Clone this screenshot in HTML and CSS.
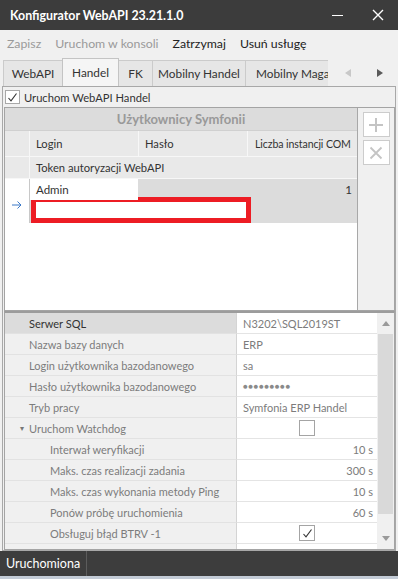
FILE: index.html
```html
<!DOCTYPE html>
<html lang="pl">
<head>
    <meta charset="UTF-8">
    <title>Konfigurator WebAPI</title>
    <link rel="stylesheet" href="styles.css">
</head>
<body>

<div class="window">
    <div class="titlebar">
        <span class="title">Konfigurator WebAPI 23.21.1.0</span>
        <span class="win-btns">
            <span class="min-btn"></span>
            <svg class="close-btn" width="12" height="12" viewBox="0 0 12 12">
                <path d="M1 1 L11 11 M11 1 L1 11" stroke="#fff" stroke-width="1.4" fill="none"/>
            </svg>
        </span>
    </div>

    <div class="menubar">
        <span class="menu-item off">Zapisz</span>
        <span class="menu-item off">Uruchom w konsoli</span>
        <span class="menu-item">Zatrzymaj</span>
        <span class="menu-item">Usuń usługę</span>
    </div>

    <div class="tabstrip">
        <div class="tabs">
            <div class="tab t-webapi">WebAPI</div>
            <div class="tab t-handel active">Handel</div>
            <div class="tab t-fk">FK</div>
            <div class="tab t-mh">Mobilny Handel</div>
            <div class="tab t-mm">Mobilny Magazyn</div>
        </div>
        <div class="tab-nav">
            <svg width="6" height="8" viewBox="0 0 6 8"><path d="M6 0 L0 4 L6 8 Z" fill="#c8c8c8"/></svg>
            <svg width="6" height="8" viewBox="0 0 6 8"><path d="M0 0 L6 4 L0 8 Z" fill="#5a5a5a"/></svg>
        </div>
    </div>

    <div class="page">
        <div class="run-check">
            <span class="cb">
                <svg width="11" height="11" viewBox="0 0 11 11"><path d="M1.5 6 L4 8.8 L9.5 1.5" stroke="#333" stroke-width="1.1" fill="none"/></svg>
            </span>
            Uruchom WebAPI Handel
        </div>

        <div class="users">
            <div class="grid">
                <div class="band">Użytkownicy Symfonii</div>
                <div class="hrow">
                    <div class="ind"></div>
                    <div class="hc">Login</div>
                    <div class="hc">Hasło</div>
                    <div class="hc last">Liczba instancji COM</div>
                </div>
                <div class="hrow token-head">
                    <div class="ind"></div>
                    <div class="hc span3">Token autoryzacji WebAPI</div>
                </div>
                <div class="drow">
                    <div class="ind current">
                        <svg width="10" height="8" viewBox="0 0 10 8"><path d="M0 4 H9 M5.5 0.5 L9 4 L5.5 7.5" stroke="#3a78c8" stroke-width="1" fill="none"/></svg>
                    </div>
                    <div class="dcells">
                        <div class="dline">
                            <div class="dc login">Admin</div>
                            <div class="dc"></div>
                            <div class="dc num">1</div>
                        </div>
                        <div class="dline token-line">
                            <div class="token-mark"></div>
                        </div>
                    </div>
                </div>
            </div>
            <div class="side">
                <div class="side-btn">
                    <svg width="16" height="16" viewBox="0 0 16 16"><path d="M8 1 V15 M1 8 H15" stroke="#c4c4c4" stroke-width="2" fill="none"/></svg>
                </div>
                <div class="side-btn">
                    <svg width="14" height="14" viewBox="0 0 14 14"><path d="M1.5 1.5 L12.5 12.5 M12.5 1.5 L1.5 12.5" stroke="#c4c4c4" stroke-width="1.8" fill="none"/></svg>
                </div>
            </div>
        </div>

        <div class="props">
            <div class="plist">
                <div class="prow selected"><div class="pl">Serwer SQL</div><div class="pv">N3202\SQL2019ST</div></div>
                <div class="prow"><div class="pl">Nazwa bazy danych</div><div class="pv">ERP</div></div>
                <div class="prow"><div class="pl">Login użytkownika bazodanowego</div><div class="pv">sa</div></div>
                <div class="prow"><div class="pl">Hasło użytkownika bazodanowego</div><div class="pv dots">●●●●●●●●●</div></div>
                <div class="prow"><div class="pl">Tryb pracy</div><div class="pv">Symfonia ERP Handel</div></div>
                <div class="prow"><div class="pl cat"><span class="caret">▾</span>Uruchom Watchdog</div><div class="pv center"><span class="pcb"></span></div></div>
                <div class="prow"><div class="pl sub">Interwał weryfikacji</div><div class="pv right">10 s</div></div>
                <div class="prow"><div class="pl sub">Maks. czas realizacji zadania</div><div class="pv right">300 s</div></div>
                <div class="prow"><div class="pl sub">Maks. czas wykonania metody Ping</div><div class="pv right">10 s</div></div>
                <div class="prow"><div class="pl sub">Ponów próbę uruchomienia</div><div class="pv right">60 s</div></div>
                <div class="prow"><div class="pl sub">Obsługuj błąd BTRV -1</div><div class="pv center"><span class="pcb">
                    <svg width="11" height="11" viewBox="0 0 11 11"><path d="M1.5 6 L4 8.8 L9.5 1.5" stroke="#333" stroke-width="1.1" fill="none"/></svg>
                </span></div></div>
                <div class="prow"><div class="pl sub"></div><div class="pv"></div></div>
            </div>
            <div class="vscroll">
                <svg class="arrow" width="8" height="5" viewBox="0 0 8 5"><path d="M0 5 L4 0 L8 5 Z" fill="#9a9a9a"/></svg>
                <div class="thumb"></div>
                <div class="track"></div>
                <svg class="arrow" width="8" height="5" viewBox="0 0 8 5"><path d="M0 0 L4 5 L8 0 Z" fill="#9a9a9a"/></svg>
            </div>
        </div>
    </div>

    <div class="statusbar">
        <span class="status-cell">Uruchomiona</span>
    </div>
    <div class="bottom-strip"></div>
</div>

</body>
</html>
```

FILE: styles.css
```css
body {
    margin: 0;
    padding: 0;
    font-family: Lato, "Open Sans", sans-serif;
    font-size: 11.5px;
    color: #333;
}
.window {
    width: 398px;
    height: 579px;
    display: flex;
    flex-direction: column;
    background: #f0f0f0;
    overflow: hidden;
}

/* title bar */
.titlebar {
    height: 30px;
    flex: none;
    background: #3c3c3c;
    color: #fff;
    display: flex;
    align-items: center;
    justify-content: space-between;
    padding: 0 14px 0 10px;
}
.title {
    font-weight: bold;
    font-size: 12.4px;
}
.win-btns {
    display: flex;
    align-items: center;
    gap: 29px;
}
.min-btn {
    width: 11px;
    height: 1px;
    background: #fff;
}

/* menu */
.menubar {
    height: 26px;
    flex: none;
    display: flex;
    align-items: center;
    padding-left: 7px;
    gap: 14px;
    font-size: 12.3px;
    color: #222;
}
.menu-item.off {
    color: #9a9a9a;
}

/* tabs */
.tabstrip {
    height: 30px;
    flex: none;
    display: flex;
    align-items: flex-end;
    padding-left: 3px;
}
.tabs {
    width: 325px;
    display: flex;
    align-items: flex-end;
    overflow: hidden;
    flex: none;
}
.tab {
    height: 26px;
    flex: none;
    box-sizing: border-box;
    display: flex;
    align-items: center;
    justify-content: center;
    background: #e6e6e6;
    border: 1px solid #cbcbcb;
    border-bottom: none;
    margin-right: -1px;
    font-size: 11.8px;
    color: #333;
    white-space: nowrap;
}
.tab.active {
    height: 28px;
    background: #f5f5f5;
    border-color: #c4c4c4;
    position: relative;
}
.t-webapi { width: 60px; }
.t-handel { width: 57px; }
.t-fk { width: 35px; }
.t-mh { width: 94px; }
.t-mm { width: 100px; justify-content: flex-start; padding-left: 10px; }
.tab-nav {
    flex: 1;
    height: 26px;
    display: flex;
    align-items: center;
    justify-content: space-between;
    padding: 0 15px 0 17px;
}

/* page */
.page {
    flex: 1;
    margin: 0 2px;
    border: 1px solid #a8a8a8;
    padding: 0 0 0 1px;
    display: flex;
    flex-direction: column;
    min-height: 0;
}
.run-check {
    height: 20px;
    flex: none;
    display: flex;
    align-items: center;
    gap: 4px;
    font-size: 11.2px;
}
.cb {
    width: 15px;
    height: 14px;
    box-sizing: border-box;
    border: 1px solid #a8a8a8;
    background: #fff;
    display: flex;
    align-items: center;
    justify-content: center;
    margin-left: 1px;
}

/* users grid */
.users {
    height: 204px;
    flex: none;
    box-sizing: border-box;
    border: 1px solid #a4a4a4;
    display: flex;
    background: #fff;
}
.grid {
    width: 352px;
    flex: none;
}
.band {
    height: 23px;
    box-sizing: border-box;
    border-bottom: 1px solid #d0d0d0;
    background: #dcdcdc;
    color: #999;
    font-weight: bold;
    font-size: 13px;
    display: flex;
    align-items: center;
    justify-content: center;
}
.hrow {
    display: grid;
    grid-template-columns: 24px 109px 109px 110px;
    height: 26px;
    background: #e9e9e9;
    border-bottom: 1px solid #f7f7f7;
    box-sizing: border-box;
    font-size: 11.2px;
}
.hrow.token-head {
    height: 22px;
}
.hc {
    display: flex;
    align-items: center;
    padding-left: 6px;
    border-left: 1px solid #f7f7f7;
    white-space: nowrap;
    overflow: hidden;
}
.hc.last {
    padding-left: 7px;
    font-size: 10.6px;
    letter-spacing: -0.1px;
}
.hc.span3 {
    grid-column: 2 / 5;
}
.ind {
    background: #e9e9e9;
}
.drow {
    display: grid;
    grid-template-columns: 24px 328px;
    height: 44px;
}
.ind.current {
    background: #fff;
    display: flex;
    align-items: flex-end;
    padding: 0 0 14px 7px;
}
.dcells {
    border-left: 1px solid #c8c8c8;
    background: #dcdcdc;
}
.dline {
    display: grid;
    grid-template-columns: 108px 109px 110px;
    height: 21px;
}
.dc {
    display: flex;
    align-items: center;
}
.dc.login {
    background: #fff;
    padding-left: 6px;
}
.dc.num {
    justify-content: flex-end;
    padding-right: 5px;
}
.token-line {
    display: block;
    height: 23px;
}
.token-mark {
    width: 220px;
    height: 26px;
    box-sizing: border-box;
    margin: -3px 0 0 1px;
    border: 5px solid #ed1c24;
    background: #fff;
}
.side {
    flex: 1;
    background: #f0f0f0;
    border-left: 1px solid #a8a8a8;
    display: flex;
    flex-direction: column;
    align-items: center;
    padding-top: 4px;
    gap: 3px;
}
.side-btn {
    width: 27px;
    height: 25px;
    box-sizing: border-box;
    border: 1px solid #cccccc;
    background: #fff;
    display: flex;
    align-items: center;
    justify-content: center;
}

/* property grid */
.props {
    flex: 1;
    min-height: 0;
    box-sizing: border-box;
    border: 1px solid #a4a4a4;
    border-top-width: 2px;
    border-top-color: #9c9c9c;
    display: flex;
    overflow: hidden;
    font-size: 11px;
}
.plist {
    width: 372px;
    flex: none;
}
.prow {
    display: grid;
    grid-template-columns: 231px 141px;
    height: 21px;
}
.pl {
    display: flex;
    align-items: center;
    padding-left: 24px;
    background: #f0f0f0;
    border-bottom: 1px solid #e2e2e2;
    color: #7c7c7c;
    white-space: nowrap;
}
.prow.selected .pl {
    background: #dcdcdc;
    color: #333;
}
.pl.cat {
    padding-left: 15px;
}
.caret {
    font-size: 8px;
    width: 9px;
    color: #777;
}
.pl.sub {
    padding-left: 45px;
}
.pv {
    display: flex;
    align-items: center;
    padding: 0 6px;
    background: #fff;
    border-left: 1px solid #d4d4d4;
    border-bottom: 1px solid #e4e4e4;
    color: #7c7c7c;
    white-space: nowrap;
}
.pv.dots {
    font-size: 8px;
    letter-spacing: 0.5px;
    color: #8a8a8a;
}
.pv.right {
    justify-content: flex-end;
    padding-right: 4px;
}
.pv.center {
    justify-content: center;
}
.pcb {
    width: 16px;
    height: 16px;
    box-sizing: border-box;
    border: 1px solid #a4a4a4;
    background: #fff;
    display: flex;
    align-items: center;
    justify-content: center;
}
.vscroll {
    flex: 1;
    background: #f0f0f0;
    display: flex;
    flex-direction: column;
    align-items: center;
}
.vscroll .arrow {
    flex: none;
    margin: 8px 0;
}
.thumb {
    width: 15px;
    height: 180px;
    background: #d9d9d9;
    flex: none;
}
.track {
    flex: 1;
}

/* status */
.statusbar {
    height: 25px;
    flex: none;
    background: #3d3d3d;
    color: #fff;
    display: flex;
    align-items: center;
    font-size: 12.5px;
}
.status-cell {
    height: 100%;
    width: 80px;
    display: flex;
    align-items: center;
    padding-left: 6px;
    border-right: 1px solid #5c5c5c;
}
.bottom-strip {
    height: 3px;
    flex: none;
    background: #c3cbd6;
}
```
